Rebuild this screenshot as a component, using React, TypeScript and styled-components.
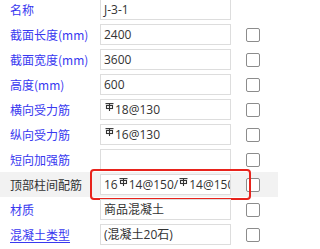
import React from "react";
import styled, { createGlobalStyle } from "styled-components";

const GlobalStyle = createGlobalStyle`
  html, body {
    margin: 0;
    padding: 0;
    background: #ffffff;
    overflow: hidden;
  }
  body {
    font-family: "Noto Sans CJK SC", "Noto Sans", sans-serif;
  }
`;

const Panel = styled.div`
  display: flex;
  flex-direction: column;
  margin-top: -3px;
  width: 278px;
`;

const Row = styled.div<{ $active?: boolean }>`
  position: relative;
  display: flex;
  align-items: center;
  height: 25px;
  background: ${(p) => (p.$active ? "#f2f2f2" : "transparent")};
`;

const Label = styled.div<{ $active?: boolean; $link?: boolean }>`
  flex: none;
  box-sizing: border-box;
  width: 100px;
  padding-left: 10px;
  font-size: 12px;
  line-height: 16px;
  white-space: nowrap;
  color: ${(p) => (p.$active ? "#333333" : "#3838f0")};
  text-decoration: ${(p) => (p.$link ? "underline" : "none")};
  text-underline-offset: 2px;
`;

const Field = styled.div`
  flex: none;
  box-sizing: border-box;
  width: 131px;
  height: 21px;
  border: 1px solid #dddddd;
  background: #ffffff;
  padding: 0 3px;
  font-family: "Open Sans", "Noto Sans CJK SC", sans-serif;
  font-size: 12px;
  line-height: 19px;
  color: #333333;
  white-space: nowrap;
  overflow: hidden;
`;

const Check = styled.div`
  flex: none;
  box-sizing: border-box;
  width: 14px;
  height: 14px;
  margin-left: 15px;
  border: 1px solid #8c8c8c;
  border-radius: 2px;
  background: #ffffff;
`;

const Highlight = styled.div`
  position: absolute;
  left: 90px;
  right: 27px;
  top: -3px;
  bottom: -3px;
  box-sizing: border-box;
  border: 2px solid #e8231c;
  border-radius: 4px;
  pointer-events: none;
`;

const RebarMark = styled.svg`
  width: 9px;
  height: 8px;
  vertical-align: 3px;
  margin: 0 1px;
`;

const Rebar = () => (
  <RebarMark viewBox="0 0 9 8" fill="none" stroke="#333333" strokeWidth="1.1">
    <path d="M0.5 0.6H8.5" />
    <rect x="1.5" y="2.5" width="6" height="3" />
    <path d="M4.5 0.6V8" />
  </RebarMark>
);

type Item = {
  label: string;
  value: React.ReactNode;
  check?: boolean;
  active?: boolean;
  link?: boolean;
};

const items: Item[] = [
  { label: "名称", value: "J-3-1", check: false },
  { label: "截面长度(mm)", value: "2400", check: true },
  { label: "截面宽度(mm)", value: "3600", check: true },
  { label: "高度(mm)", value: "600", check: true },
  { label: "横向受力筋", value: <><Rebar />18@130</>, check: true },
  { label: "纵向受力筋", value: <><Rebar />16@130</>, check: true },
  { label: "短向加强筋", value: "", check: true },
  {
    label: "顶部柱间配筋",
    value: <>16<Rebar />14@150/<Rebar />14@150</>,
    check: true,
    active: true,
  },
  { label: "材质", value: "商品混凝土", check: true },
  { label: "混凝土类型", value: "(混凝土20石)", check: true, link: true },
];

export default function App() {
  return (
    <>
      <GlobalStyle />
      <Panel>
        {items.map((it) => (
          <Row key={it.label} $active={it.active}>
            <Label $active={it.active} $link={it.link}>
              {it.label}
            </Label>
            <Field>{it.value}</Field>
            {it.check && <Check />}
            {it.active && <Highlight />}
          </Row>
        ))}
      </Panel>
    </>
  );
}
